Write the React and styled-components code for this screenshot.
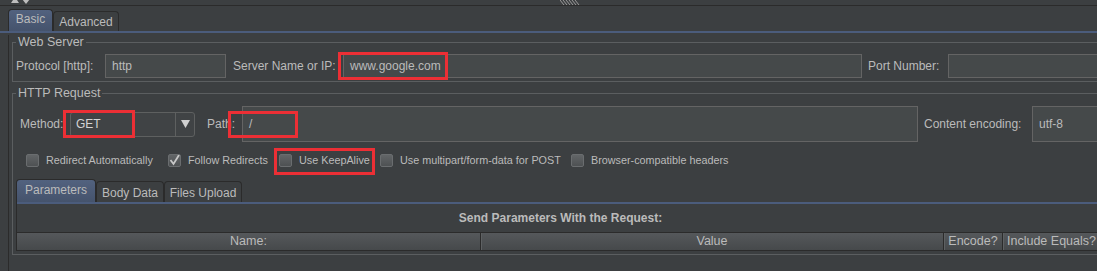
import React from 'react';
import styled, { createGlobalStyle } from 'styled-components';

const GlobalStyle = createGlobalStyle`
  html, body {
    margin: 0;
    padding: 0;
    background: #3c3f41;
  }
  body {
    font-family: "Liberation Sans", Arial, sans-serif;
  }
`;

const Screen = styled.div`
  position: relative;
  width: 1097px;
  height: 271px;
  overflow: hidden;
  background: #3c3f41;
  color: #bbbbbb;
  font-size: 12px;
`;

const TopStrip = styled.div`
  height: 5px;
  border-bottom: 1px solid #2b2b2b;
  display: flex;
  align-items: flex-start;
  overflow: hidden;
  padding-left: 10px;
`;

const Grip = styled.svg`
  margin-left: 528px;
`;

const TabRow = styled.div`
  display: flex;
  align-items: flex-end;
  margin-top: ${p => p.$top}px;
  margin-left: ${p => p.$left}px;
  height: ${p => p.$h}px;
`;

const Tab = styled.div`
  width: ${p => p.$w}px;
  height: ${p => (p.$active ? p.$h : p.$h - 2)}px;
  line-height: ${p => (p.$active ? p.$h - 3 : p.$h - 1)}px;
  box-sizing: border-box;
  text-align: center;
  border: 1px solid #2b2b2b;
  border-bottom: none;
  border-radius: 4px 4px 0 0;
  background: ${p =>
    p.$active ? 'linear-gradient(#52627f, #45536c)' : '#3c3f41'};
  color: #bbbbbb;
  font-size: 12px;
  white-space: nowrap;
`;

const TabLine = styled.div`
  height: 2px;
  background: #4b5c7c;
`;

const Pane = styled.div`
  margin-left: 8px;
  padding-left: 3px;
  border-left: 1px solid #2b2b2b;
  height: 240px;
`;

const Group = styled.fieldset`
  margin: ${p => p.$top}px 0 0 0;
  padding: ${p => p.$padTop}px 3px 3px 3px;
  border: 1px solid #5b5e60;
  width: 1200px;
  min-width: 0;
  box-sizing: border-box;
`;

const Legend = styled.legend`
  padding: 0 2px;
  font-size: 12.5px;
  line-height: 14px;
  color: #bbbbbb;
`;

const Row = styled.div`
  display: flex;
  align-items: center;
  height: ${p => p.$h}px;
  padding-left: ${p => p.$pad || 0}px;
`;

const Label = styled.div`
  width: ${p => p.$w}px;
  margin-left: ${p => p.$gap || 0}px;
  white-space: nowrap;
  font-size: 12px;
  color: #bbbbbb;
`;

const Field = styled.div`
  position: relative;
  width: ${p => p.$w}px;
  height: ${p => p.$h}px;
  margin-left: ${p => p.$gap}px;
  box-sizing: border-box;
  background: #45494a;
  border: 1px solid #646464;
  padding-left: 6px;
  display: flex;
  align-items: center;
  color: #bbbbbb;
  font-size: 12px;
  flex-shrink: 0;
`;

const Combo = styled.div`
  position: relative;
  width: 125px;
  height: 25px;
  margin-left: 6px;
  box-sizing: border-box;
  border: 1px solid #5e6060;
  border-radius: 3px;
  background: #404345;
  display: flex;
  align-items: center;
  flex-shrink: 0;
`;

const ComboText = styled.div`
  flex: 1;
  padding-left: 5px;
  color: #d4d4d4;
  font-size: 12px;
`;

const ComboButton = styled.div`
  width: 18px;
  height: 100%;
  border-left: 1px solid #5e6060;
  display: flex;
  align-items: center;
  justify-content: center;
`;

const Highlight = styled.div`
  position: absolute;
  left: ${p => p.$x}px;
  top: ${p => p.$y}px;
  width: ${p => p.$w}px;
  height: ${p => p.$h}px;
  box-sizing: border-box;
  border: 3px solid #ec2f35;
  pointer-events: none;
`;

const CheckRow = styled.div`
  display: flex;
  align-items: center;
  height: 14px;
  margin-top: 11px;
  padding-left: 10px;
`;

const CheckItem = styled.div`
  position: relative;
  display: flex;
  align-items: center;
  gap: 7px;
  width: ${p => p.$w}px;
  flex-shrink: 0;
  font-size: 10.8px;
  color: #bbbbbb;
  white-space: nowrap;
`;

const Box = styled.div`
  width: 13px;
  height: 13px;
  flex-shrink: 0;
  box-sizing: border-box;
  border: 1px solid #6a6d6f;
  border-radius: 2px;
  background: linear-gradient(#626567, #4e5153);
  display: flex;
  align-items: center;
  justify-content: center;
`;

const SubPane = styled.div`
  border-left: 1px solid #2b2b2b;
`;

const PaneTitle = styled.div`
  width: 1087px;
  height: 28px;
  line-height: 28px;
  text-align: center;
  font-weight: bold;
  font-size: 12px;
  color: #bbbbbb;
`;

const TableHeader = styled.div`
  display: grid;
  grid-template-columns: 463px 463px 59px 98px;
  height: 19px;
  box-sizing: border-box;
  border-top: 1px solid #2b2b2b;
  border-bottom: 1px solid #2b2b2b;
  background: linear-gradient(#55585b, #46494b);
`;

const HeadCell = styled.div`
  text-align: center;
  line-height: 17px;
  font-size: 12.5px;
  color: #bbbbbb;
  white-space: nowrap;
  border-left: ${p => (p.$first ? 'none' : '1px solid #2b2b2b')};
  box-shadow: ${p => (p.$first ? 'none' : 'inset 1px 0 0 #5e6163')};
`;

const Check = ({ label, checked, w, children }) => (
  <CheckItem $w={w}>
    <Box>
      {checked && (
        <svg width="11" height="11" viewBox="0 0 11 11">
          <polyline points="1.5,5 4.5,9 10,0" fill="none" stroke="#c8c8c8" strokeWidth="1.8" />
        </svg>
      )}
    </Box>
    {label}
    {children}
  </CheckItem>
);

export default function App() {
  return (
    <Screen>
      <GlobalStyle />
      <TopStrip>
        <svg width="22" height="5" viewBox="0 0 22 5">
          <polygon points="1,3 5,-3 9,3" fill="#bdbdbd" />
          <polygon points="12,-1 20,-1 16,4" fill="#bdbdbd" />
        </svg>
        <Grip width="20" height="5" viewBox="0 0 20 5">
          {[0, 3, 6, 9, 12, 15].map(x => (
            <line key={x} x1={x} y1="0" x2={x + 4} y2="5" stroke="#9a9a9a" strokeWidth="1" />
          ))}
        </Grip>
      </TopStrip>

      <TabRow $top={3} $left={8} $h={22}>
        <Tab $active $h={22} $w={45}>Basic</Tab>
        <Tab $h={22} $w={66}>Advanced</Tab>
      </TabRow>
      <TabLine />

      <Pane>
        <Group $top={2} $padTop={5}>
          <Legend>Web Server</Legend>
          <Row $h={24}>
            <Label $w={83}>Protocol [http]:</Label>
            <Field $w={121} $h={24} $gap={6}>http</Field>
            <Label $w={103} $gap={7}>Server Name or IP:</Label>
            <Field $w={519} $h={24} $gap={7}>
              www.google.com
              <Highlight $x={-6} $y={-3} $w={110} $h={28} />
            </Field>
            <Label $w={74} $gap={6}>Port Number:</Label>
            <Field $w={200} $h={24} $gap={6} />
          </Row>
        </Group>

        <Group $top={4} $padTop={6}>
          <Legend>HTTP Request</Legend>
          <Row $h={36} $pad={4}>
            <Label $w={44}>Method:</Label>
            <Combo>
              <ComboText>GET</ComboText>
              <ComboButton>
                <svg width="9" height="8" viewBox="0 0 9 8">
                  <polygon points="0,0 9,0 4.5,8" fill="#d0d0d0" />
                </svg>
              </ComboButton>
              <Highlight $x={-8} $y={-3} $w={72} $h={28} />
            </Combo>
            <Label $w={28} $gap={12}>Path:</Label>
            <Field $w={676} $h={36} $gap={7}>
              /
              <Highlight $x={-15} $y={4} $w={70} $h={27} />
            </Field>
            <Label $w={101} $gap={6}>Content encoding:</Label>
            <Field $w={120} $h={36} $gap={7}>utf-8</Field>
          </Row>

          <CheckRow>
            <Check label="Redirect Automatically" w={142} />
            <Check label="Follow Redirects" w={111} checked />
            <Check label="Use KeepAlive" w={101}>
              <Highlight $x={-5} $y={-6} $w={101} $h={27} />
            </Check>
            <Check label="Use multipart/form-data for POST" w={191} />
            <Check label="Browser-compatible headers" w={160} />
          </CheckRow>

          <TabRow $top={12} $left={0} $h={23}>
            <Tab $active $h={23} $w={80}>Parameters</Tab>
            <Tab $h={23} $w={68}>Body Data</Tab>
            <Tab $h={23} $w={78}>Files Upload</Tab>
          </TabRow>
          <SubPane>
            <TabLine />
            <PaneTitle>Send Parameters With the Request:</PaneTitle>
            <TableHeader>
              <HeadCell $first>Name:</HeadCell>
              <HeadCell>Value</HeadCell>
              <HeadCell>Encode?</HeadCell>
              <HeadCell>Include Equals?</HeadCell>
            </TableHeader>
          </SubPane>
        </Group>
      </Pane>
    </Screen>
  );
}
